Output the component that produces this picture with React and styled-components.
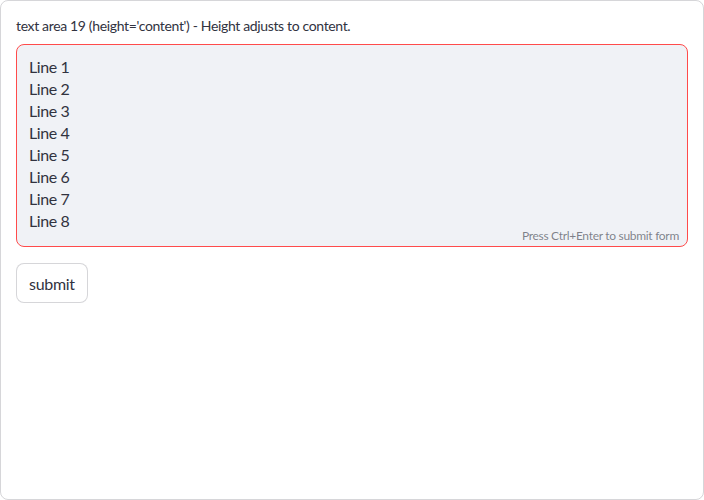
import React from "react";
import styled, { createGlobalStyle } from "styled-components";

const Global = createGlobalStyle`
  * { box-sizing: border-box; }
  html, body { margin: 0; padding: 0; background: #fff; }
  body { font-family: "Lato", "Noto Sans", sans-serif; color: rgb(49, 51, 63); }
`;

const Form = styled.form`
  width: 704px;
  height: 500px;
  border: 1px solid rgba(49, 51, 63, 0.2);
  border-radius: 8px;
  padding: 15px;
  display: flex;
  flex-direction: column;
  gap: 16px;
`;

const Field = styled.div`
  display: flex;
  flex-direction: column;
`;

const Label = styled.label`
  font-size: 14px;
  line-height: 20px;
  height: 28px;
  padding-top: 0;
  letter-spacing: -0.35px;
`;

const AreaWrap = styled.div`
  position: relative;
  border: 1px solid #ff4b4b;
  border-radius: 8px;
  background: #f0f2f6;
`;

const Area = styled.textarea`
  display: block;
  width: 100%;
  height: 201px;
  border: none;
  outline: none;
  resize: none;
  background: transparent;
  font-family: inherit;
  font-size: 16px;
  line-height: 22px;
  letter-spacing: -0.4px;
  color: rgb(49, 51, 63);
  padding: 11px 12px 14px 12px;
  overflow: hidden;
`;

const Hint = styled.div`
  position: absolute;
  right: 8px;
  bottom: 2px;
  font-size: 12px;
  line-height: 16px;
  letter-spacing: -0.3px;
  color: rgba(49, 51, 63, 0.6);
`;

const Button = styled.button`
  align-self: flex-start;
  height: 40px;
  padding: 0 12px;
  border: 1px solid rgba(49, 51, 63, 0.2);
  border-radius: 8px;
  background: #fff;
  font-family: inherit;
  font-size: 16px;
  letter-spacing: -0.3px;
  color: rgb(49, 51, 63);
`;

const lines = Array.from({ length: 8 }, (_, i) => `Line ${i + 1}`).join("\n");

export default function App() {
  return (
    <>
      <Global />
      <Form onSubmit={(e) => e.preventDefault()}>
        <Field>
          <Label>text area 19 (height='content') - Height adjusts to content.</Label>
          <AreaWrap>
            <Area defaultValue={lines} />
            <Hint>Press Ctrl+Enter to submit form</Hint>
          </AreaWrap>
        </Field>
        <Button type="submit">submit</Button>
      </Form>
    </>
  );
}
